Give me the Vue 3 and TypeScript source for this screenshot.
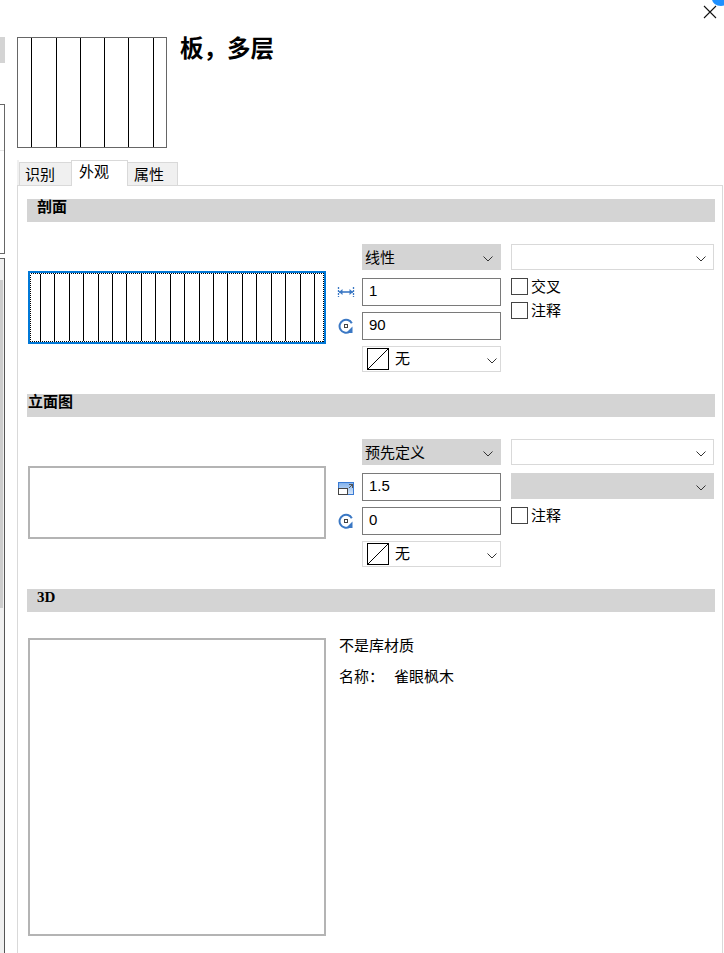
<script setup lang="ts">
const swatchLines: number[] = [14, 39, 63, 87, 111, 136]
const hatchLines: number[] = [10, 24, 39, 53, 68, 82, 96, 111, 125, 140, 154, 169, 183, 197, 212, 226, 241, 255, 270, 284]
</script>

<template>
  <div class="page">
    <aside class="rail">
      <div class="rail-block"></div>
      <div class="rail-box"><div class="rail-divider"></div></div>
      <div class="rail-list"><div class="rail-thumb"></div></div>
    </aside>

    <main class="main">
      <header class="header">
        <svg class="swatch" width="150" height="111" viewBox="0 0 150 111" shape-rendering="crispEdges">
          <rect x="0.5" y="0.5" width="149" height="110" fill="#fff" stroke="#666" />
          <line v-for="x in swatchLines" :key="x" :x1="x + 0.5" y1="1" :x2="x + 0.5" y2="110" stroke="#000" />
        </svg>
        <h1 class="title">板，多层</h1>
      </header>

      <nav class="tabs">
        <div class="tab">识别</div>
        <div class="tab tab-active">外观</div>
        <div class="tab tab-last">属性</div>
      </nav>

      <div class="panel">
        <section class="section">
          <h2 class="bar">剖面</h2>
          <div class="row">
            <div class="preview preview-focus">
              <svg class="hatch" width="294" height="69" viewBox="0 0 294 69" shape-rendering="crispEdges">
                <rect x="0.5" y="0.5" width="293" height="68" fill="#fff" stroke="#000" stroke-dasharray="1 1" />
                <line v-for="x in hatchLines" :key="x" :x1="x + 0.5" y1="1" :x2="x + 0.5" y2="68" stroke="#000" />
              </svg>
            </div>
            <div class="fields">
              <div class="field-row field-first">
                <div class="select select-filled"><span class="select-text">线性</span><svg class="chev" width="10" height="6" viewBox="0 0 10 6"><path d="M.5.5 5 5 9.500.5" fill="none" stroke="#333" /></svg></div>
              </div>
              <div class="field-row">
                <svg class="icon" width="18" height="16" viewBox="0 0 18 16">
                  <path d="M1.500 3v10M16.500 3v10" stroke="#3b78c4" stroke-width="1.300" stroke-dasharray="2 1" fill="none" />
                  <path d="M2 8h14" stroke="#3b78c4" stroke-width="1.600" fill="none" />
                  <path d="M2 8l3.500-3v6zM16 8l-3.500-3v6z" fill="#3b78c4" />
                </svg>
                <input class="input" value="1" readonly />
              </div>
              <div class="field-row">
                <svg class="icon" width="18" height="16" viewBox="0 0 18 16">
                  <path d="M14.800 5.200A6.500 6.500 0 1 0 12.500 13.800" fill="none" stroke="#3b78c4" stroke-width="2" />
                  <path d="M15.500 8.500v6.500h-6.500z" fill="#3b78c4" />
                  <rect x="7.500" y="6.500" width="3" height="3" fill="none" stroke="#444" />
                </svg>
                <input class="input" value="90" readonly />
              </div>
              <div class="field-row">
                <div class="select select-line">
                  <svg class="null-box" width="22" height="22" viewBox="0 0 22 22"><rect x="0.500" y="0.500" width="21" height="21" fill="#fff" stroke="#000" /><line x1="1" y1="21" x2="21" y2="1" stroke="#000" /></svg>
                  <span class="null-text">无</span>
                  <svg class="chev chev-end" width="10" height="6" viewBox="0 0 10 6"><path d="M.5.5 5 5 9.500.5" fill="none" stroke="#333" /></svg>
                </div>
              </div>
            </div>
            <div class="extras">
              <div class="select select-line select-wide"><svg class="chev" width="10" height="6" viewBox="0 0 10 6"><path d="M.5.5 5 5 9.500.5" fill="none" stroke="#333" /></svg></div>
              <label class="check check-first"><span class="box"></span>交叉</label>
              <label class="check"><span class="box"></span>注释</label>
            </div>
          </div>
        </section>

        <section class="section">
          <h2 class="bar bar-tight">立面图</h2>
          <div class="row">
            <div class="preview"></div>
            <div class="fields">
              <div class="field-row field-first">
                <div class="select select-filled"><span class="select-text">预先定义</span><svg class="chev" width="10" height="6" viewBox="0 0 10 6"><path d="M.5.5 5 5 9.500.5" fill="none" stroke="#333" /></svg></div>
              </div>
              <div class="field-row">
                <svg class="icon" width="18" height="16" viewBox="0 0 18 16" shape-rendering="crispEdges">
                  <defs>
                    <linearGradient id="scaleFill" x1="0" y1="0" x2="0" y2="1">
                      <stop offset="0" stop-color="#7fb0ec" />
                      <stop offset="1" stop-color="#dbe8f8" />
                    </linearGradient>
                  </defs>
                  <rect x="1.500" y="3.500" width="15" height="12" fill="url(#scaleFill)" stroke="#3a7bd5" />
                  <rect x="1.500" y="9.500" width="9" height="6" fill="#fff" stroke="#444" />
                  <path d="M12 5h4v4h-1v-2h-1v1h-1v1h-1v-1h1v-1h1v-1h-2z" fill="#555" />
                </svg>
                <input class="input" value="1.5" readonly />
              </div>
              <div class="field-row">
                <svg class="icon" width="18" height="16" viewBox="0 0 18 16">
                  <path d="M14.800 5.200A6.500 6.500 0 1 0 12.500 13.800" fill="none" stroke="#3b78c4" stroke-width="2" />
                  <path d="M15.500 8.500v6.500h-6.500z" fill="#3b78c4" />
                  <rect x="7.500" y="6.500" width="3" height="3" fill="none" stroke="#444" />
                </svg>
                <input class="input" value="0" readonly />
              </div>
              <div class="field-row">
                <div class="select select-line">
                  <svg class="null-box" width="22" height="22" viewBox="0 0 22 22"><rect x="0.500" y="0.500" width="21" height="21" fill="#fff" stroke="#000" /><line x1="1" y1="21" x2="21" y2="1" stroke="#000" /></svg>
                  <span class="null-text">无</span>
                  <svg class="chev chev-end" width="10" height="6" viewBox="0 0 10 6"><path d="M.5.5 5 5 9.500.5" fill="none" stroke="#333" /></svg>
                </div>
              </div>
            </div>
            <div class="extras">
              <div class="select select-line select-wide"><svg class="chev" width="10" height="6" viewBox="0 0 10 6"><path d="M.5.5 5 5 9.500.5" fill="none" stroke="#333" /></svg></div>
              <div class="select select-filled select-wide select-second"><svg class="chev" width="10" height="6" viewBox="0 0 10 6"><path d="M.5.5 5 5 9.500.5" fill="none" stroke="#333" /></svg></div>
              <label class="check check-first"><span class="box"></span>注释</label>
            </div>
          </div>
        </section>

        <section class="section">
          <h2 class="bar">3D</h2>
          <div class="row row-3d">
            <div class="preview preview-square"></div>
            <div class="material">
              <p class="material-line">不是库材质</p>
              <p class="material-line material-name"><span class="material-key">名称：</span><span>雀眼枫木</span></p>
            </div>
          </div>
        </section>
      </div>
    </main>

    <div class="corner"></div>
    <svg class="close" width="14" height="14" viewBox="0 0 14 14"><path d="M1 1l12 12M13 1 1 13" stroke="#111" stroke-width="1.100" fill="none" /></svg>
  </div>
</template>

<style>
html,
body {
  margin: 0;
  background: #fff;
}
</style>

<style scoped>
.page {
  position: relative;
  display: flex;
  width: 724px;
  height: 953px;
  overflow: hidden;
  background: #fff;
  color: #000;
  font-family: "Liberation Sans", "Noto Sans CJK SC", sans-serif;
  font-size: 15px;
}

.rail {
  flex: 0 0 5px;
  display: flex;
  flex-direction: column;
  padding-top: 37px;
  box-sizing: border-box;
}
.rail-block {
  height: 26px;
  background: #d4d4d4;
}
.rail-box {
  margin-top: 41px;
  height: 148px;
  border: 1px solid #666;
  border-left: 0;
}
.rail-divider {
  margin-top: 45px;
  height: 1px;
  background: #e6e6e6;
}
.rail-list {
  margin-top: 4px;
  flex: 1;
  border-top: 1px solid #666;
  border-right: 1px solid #555;
  background: #f0f0f0;
  padding-top: 21px;
}
.rail-thumb {
  width: 3px;
  height: 328px;
  background: #cdcdcd;
}

.main {
  margin-left: 12px;
  width: 706px;
  display: flex;
  flex-direction: column;
}

.header {
  display: flex;
  padding-top: 37px;
  height: 111px;
}
.swatch {
  display: block;
  flex: none;
}
.title {
  margin: 0 0 0 13px;
  font-size: 23.5px;
  line-height: 24px;
  font-weight: 700;
}

.tabs {
  margin-top: 12px;
  height: 25px;
  display: flex;
  align-items: flex-end;
  border-left: 2px solid #f0f0f0;
}
.tab {
  box-sizing: border-box;
  height: 23px;
  width: 53px;
  padding-left: 5px;
  line-height: 23px;
  background: #f0f0f0;
  border: 1px solid #d9d9d9;
  border-bottom: 0;
}
.tab-active {
  height: 26px;
  width: 57px;
  margin-bottom: -1px;
  margin-left: -1px;
  padding-left: 7px;
  line-height: 21px;
  background: #fff;
  position: relative;
  z-index: 1;
}
.tab-last {
  width: 51px;
  margin-left: -1px;
  padding-left: 6px;
}

.panel {
  flex: 1;
  border: 1px solid #d9d9d9;
  border-bottom: 0;
  padding: 13px 7px 0 9px;
}

.section + .section {
  margin-top: 22px;
}
.bar {
  margin: 0;
  height: 23px;
  padding-left: 10px;
  background: #d4d4d4;
  font-family: "Liberation Serif", "Noto Sans CJK SC", serif;
  font-size: 15px;
  font-weight: 700;
  line-height: 16px;
}
.bar-tight {
  padding-left: 1px;
}

.row {
  margin-top: 22px;
  padding-left: 1px;
  display: flex;
  align-items: center;
}
.row-3d {
  margin-top: 26px;
  align-items: flex-start;
}

.preview {
  box-sizing: border-box;
  flex: none;
  width: 298px;
  height: 73px;
  margin-bottom: 2px;
  border: 2px solid #b4b4b4;
  background: #fff;
}
.preview-focus {
  border-color: #0078d7;
  display: flex;
  align-items: center;
  justify-content: center;
}
.hatch {
  display: block;
}
.preview-square {
  height: 298px;
}

.fields {
  flex: none;
  width: 175px;
  display: flex;
  flex-direction: column;
  gap: 6px;
}
.field-row {
  display: flex;
  align-items: center;
  justify-content: flex-end;
  gap: 7px;
}
.field-first {
  margin-bottom: 2px;
}
.icon {
  flex: none;
}

.select {
  box-sizing: border-box;
  width: 139px;
  height: 26px;
  display: flex;
  align-items: center;
  justify-content: space-between;
  padding: 0 8px 0 3px;
}
.select-text {
  padding-bottom: 2px;
}
.select-filled {
  background: #d4d4d4;
}
.select-line {
  border: 1px solid #d9d9d9;
  background: #fff;
  padding: 0 3px 0 4px;
}
.select-wide {
  width: 203px;
  justify-content: flex-end;
  padding: 0 7px 0 0;
}
.select-filled.select-wide {
  padding-right: 8px;
}
.select-second {
  margin-top: 8px;
}
.chev {
  flex: none;
  margin-top: 4px;
}
.chev-end {
  margin-left: auto;
}
.null-box {
  flex: none;
  display: block;
}
.null-text {
  margin-left: 6px;
  padding-bottom: 4px;
}

.input {
  box-sizing: border-box;
  width: 139px;
  height: 28px;
  margin: 0;
  padding: 0 6px 4px;
  border: 1px solid #7a7a7a;
  border-radius: 0;
  outline: none;
  background: #fff;
  color: #000;
  font-family: inherit;
  font-size: 15px;
}

.extras {
  margin-left: 10px;
  align-self: flex-start;
  display: flex;
  flex-direction: column;
}
.check {
  display: flex;
  align-items: center;
  gap: 3px;
  height: 17px;
  margin-top: 7px;
  line-height: 17px;
}
.check-first {
  margin-top: 8px;
}
.box {
  box-sizing: border-box;
  width: 17px;
  height: 17px;
  border: 1px solid #444;
  background: #fff;
}

.material {
  margin-left: 13px;
}
.material-line {
  margin: 0;
  line-height: 16px;
}
.material-name {
  margin-top: 15px;
  display: flex;
}
.material-key {
  width: 55px;
}

.corner {
  position: absolute;
  top: -8px;
  right: -6px;
  width: 18px;
  height: 14px;
  border-radius: 50%;
  background: #1e90ff;
}
.close {
  position: absolute;
  top: 5px;
  right: 7px;
}
</style>
